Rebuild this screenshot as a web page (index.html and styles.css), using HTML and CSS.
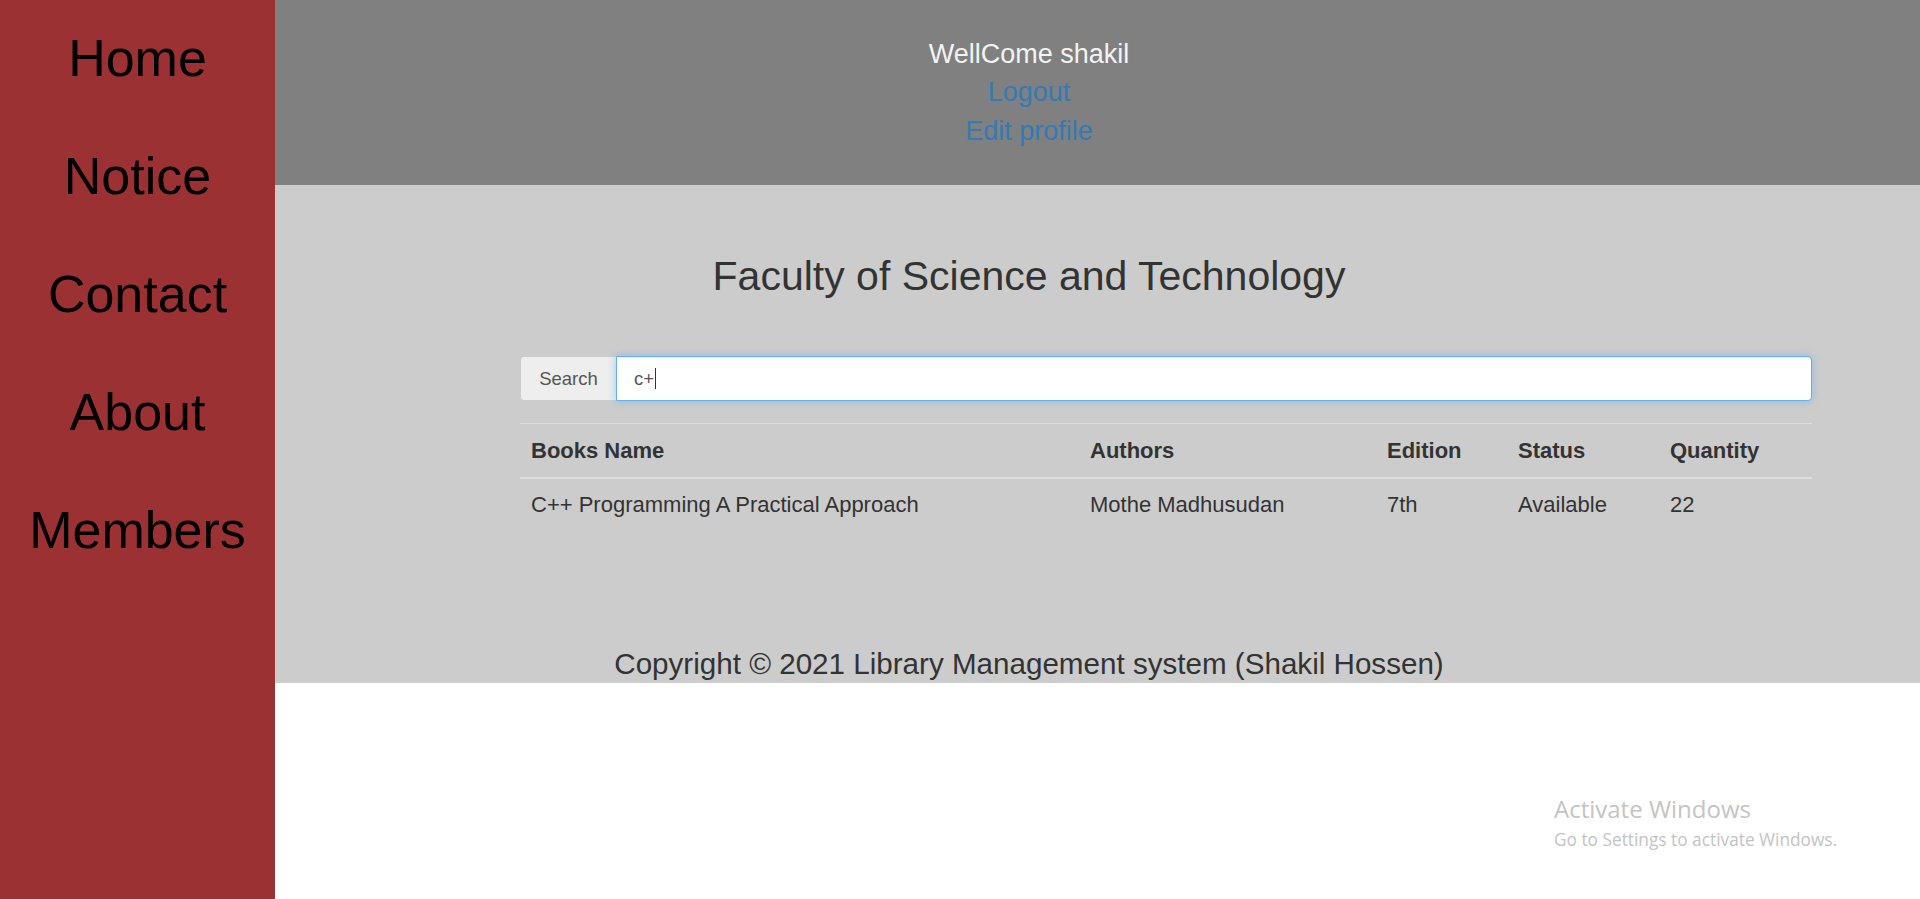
FILE: index.html
```html
<!DOCTYPE html>
<html lang="en">
<head>
<meta charset="utf-8">
<title>Library Management system</title>
<link rel="stylesheet" href="styles.css">
</head>
<body>
<div class="layout">
  <nav class="sidebar">
    <ul class="nav-list">
      <li><a href="#">Home</a></li>
      <li><a href="#">Notice</a></li>
      <li><a href="#">Contact</a></li>
      <li><a href="#">About</a></li>
      <li><a href="#">Members</a></li>
    </ul>
  </nav>
  <div class="page">
    <header class="topbar">
      <div class="welcome">WellCome shakil</div>
      <a class="toplink" href="#">Logout</a>
      <a class="toplink" href="#">Edit profile</a>
    </header>
    <main class="main">
      <h1 class="title">Faculty of Science and Technology</h1>
      <div class="content">
        <div class="search-group">
          <span class="search-addon">Search</span>
          <div class="search-input"><span class="search-text">c+</span><span class="caret"></span></div>
        </div>
        <table class="books">
          <colgroup>
            <col class="c1"><col class="c2"><col class="c3"><col class="c4"><col class="c5">
          </colgroup>
          <thead>
            <tr><th>Books Name</th><th>Authors</th><th>Edition</th><th>Status</th><th>Quantity</th></tr>
          </thead>
          <tbody>
            <tr><td>C++ Programming A Practical Approach</td><td>Mothe Madhusudan</td><td>7th</td><td>Available</td><td>22</td></tr>
          </tbody>
        </table>
      </div>
      <footer class="footer">Copyright © 2021 Library Management system (Shakil Hossen)</footer>
    </main>
  </div>
</div>
<div class="watermark">
  <div class="wm-title">Activate Windows</div>
  <div class="wm-sub">Go to Settings to activate Windows.</div>
</div>
</body>
</html>
```
FILE: styles.css
```css
html, body {
  margin: 0;
  padding: 0;
  background: #ffffff;
  font-family: "Liberation Sans", Arial, sans-serif;
}

.layout {
  display: flex;
  min-height: 899px;
}

.sidebar {
  width: 275px;
  flex: 0 0 275px;
  background: #9b3132;
  min-height: 899px;
}

.nav-list {
  list-style: none;
  margin: 0;
  padding: 0;
}

.nav-list li {
  text-align: center;
  font-size: 52px;
  line-height: 117.9px;
}

.nav-list a {
  color: #000000;
  text-decoration: none;
}

.page {
  flex: 1;
  display: flex;
  flex-direction: column;
}

.topbar {
  height: 185px;
  box-sizing: border-box;
  background: #808080;
  padding-top: 34.5px;
  padding-right: 137px;
  display: flex;
  flex-direction: column;
  align-items: center;
  font-size: 27px;
  line-height: 38.5px;
}

.welcome {
  color: #f3f3f3;
}

.toplink {
  color: #337ab7;
  text-decoration: none;
}

.main {
  background: #cccccc;
  height: 498px;
  box-sizing: border-box;
  padding-top: 69px;
  padding-bottom: 2.5px;
  display: flex;
  flex-direction: column;
}

.title {
  margin: 0;
  padding-right: 137px;
  text-align: center;
  font-size: 41px;
  font-weight: normal;
  line-height: 45px;
  color: #333333;
}

.content {
  margin: 57px 108px 0 245px;
}

.search-group {
  display: flex;
  height: 45px;
}

.search-addon {
  box-sizing: border-box;
  width: 96px;
  display: flex;
  align-items: center;
  justify-content: center;
  background: #eeeeee;
  border: 1px solid #cccccc;
  border-right: none;
  border-radius: 4px 0 0 4px;
  color: #555555;
  font-size: 18.5px;
}

.search-input {
  flex: 1;
  box-sizing: border-box;
  display: flex;
  align-items: center;
  padding-left: 17px;
  background: #ffffff;
  border: 1px solid #66afe9;
  border-radius: 0 4px 4px 0;
  box-shadow: inset 0 1px 1px rgba(0, 0, 0, 0.075), 0 0 8px rgba(102, 175, 233, 0.6);
  color: #555555;
  font-size: 18.5px;
}

.caret {
  display: inline-block;
  width: 1px;
  height: 21px;
  background: #333333;
  margin-left: 1px;
}

.books {
  width: 100%;
  margin-top: 22px;
  border-collapse: collapse;
  table-layout: fixed;
  color: #333333;
  font-size: 22px;
  line-height: 32px;
}

.c1 { width: 559px; }
.c2 { width: 297px; }
.c3 { width: 131px; }
.c4 { width: 152px; }
.c5 { width: 153px; }

.books th,
.books td {
  text-align: left;
  padding: 10.5px 11px 10px;
  white-space: nowrap;
}

.books th {
  font-weight: bold;
  border-top: 1px solid #dddddd;
  border-bottom: 2px solid #dddddd;
}

.books td {
  border-top: 1px solid #dddddd;
}

.footer {
  margin-top: auto;
  padding-right: 137px;
  text-align: center;
  font-size: 29.6px;
  line-height: normal;
  color: #333333;
}

.watermark {
  position: absolute;
  left: 1554px;
  top: 793px;
  color: #c4c4c4;
  font-family: "Open Sans", "Noto Sans", sans-serif;
  pointer-events: none;
}

.wm-title {
  font-size: 24px;
  line-height: 32px;
}

.wm-sub {
  font-size: 17.3px;
  line-height: 24px;
  margin-top: 3px;
}
```
